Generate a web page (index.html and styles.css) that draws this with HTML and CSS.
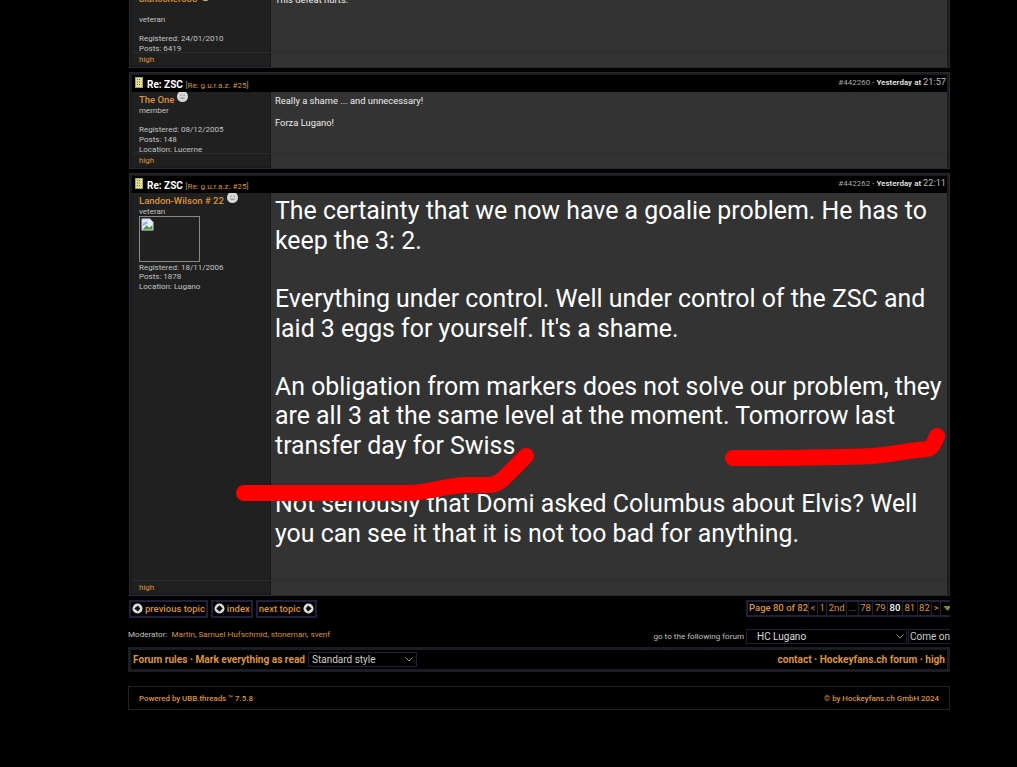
FILE: index.html
```html
<!DOCTYPE html>
<html lang="en">
<head>
    <meta charset="UTF-8">
    <meta name="viewport" content="width=device-width, initial-scale=1.0">
    <title>Re: ZSC - Hockeyfans.ch forum</title>
    <link rel="stylesheet" href="styles.css">
</head>
<body>

<div class="container">

    <!-- first post, scrolled partly out of view -->
    <div class="post">
        <div class="post-head"></div>
        <div class="post-body">
            <div class="user">
                <a class="user-name">bianconero88</a><svg class="status" viewBox="0 0 10 10"><circle cx="5" cy="5" r="5" fill="#d8c850"/></svg>
                <p>&nbsp;</p>
                <p>veteran</p>
                <p>&nbsp;</p>
                <p>Registered: 24/01/2010</p>
                <p>Posts: 6419</p>
            </div>
            <div class="text">This defeat hurts.</div>
        </div>
        <div class="post-foot"><a>high</a><span></span></div>
    </div>

    <div class="post">
        <div class="post-head">
            <span class="post-title"><svg class="doc-icon" viewBox="0 0 8 11"><rect x=".5" y=".5" width="7" height="10" fill="#e4e09a" stroke="#a8a450"/><path d="M2 2.5h4M2 5h4M2 7.5h4" stroke="#6a6a30" stroke-dasharray="1 1"/></svg>Re: ZSC <span class="post-ref">[<a>Re: g.u.r.a.z. #25</a>]</span></span>
            <span class="post-meta"><span class="post-id">#442260 -</span> <b>Yesterday at</b> <span class="post-time">21:57</span></span>
        </div>
        <div class="post-body">
            <div class="user">
                <a class="user-name">The One</a><svg class="status" viewBox="0 0 10 10"><circle cx="5" cy="5" r="5" fill="#d8d8d8"/><path d="M3 6.5h4" stroke="#888"/><path d="M3 4h1M6 4h1" stroke="#888"/></svg>
                <p>member</p>
                <p>&nbsp;</p>
                <p>Registered: 08/12/2005</p>
                <p>Posts: 148</p>
                <p>Location: Lucerne</p>
            </div>
            <div class="text">Really a shame ... and unnecessary!<br><br>Forza Lugano!</div>
        </div>
        <div class="post-foot"><a>high</a><span></span></div>
    </div>

    <div class="post">
        <div class="post-head">
            <span class="post-title"><svg class="doc-icon" viewBox="0 0 8 11"><rect x=".5" y=".5" width="7" height="10" fill="#e4e09a" stroke="#a8a450"/><path d="M2 2.5h4M2 5h4M2 7.5h4" stroke="#6a6a30" stroke-dasharray="1 1"/></svg>Re: ZSC <span class="post-ref">[<a>Re: g.u.r.a.z. #25</a>]</span></span>
            <span class="post-meta"><span class="post-id">#442262 -</span> <b>Yesterday at</b> <span class="post-time">22:11</span></span>
        </div>
        <div class="post-body big-body">
            <div class="user">
                <a class="user-name">Landon-Wilson # 22</a><svg class="status" viewBox="0 0 10 10"><circle cx="5" cy="5" r="5" fill="#d8d8d8"/><path d="M3 6.5h4" stroke="#888"/><path d="M3 4h1M6 4h1" stroke="#888"/></svg>
                <p>veteran</p>
                <div class="avatar">
                    <svg viewBox="0 0 16 16"><path d="M1 1h10l4 4v10H1z" fill="#e8eef5" stroke="#aab"/><path d="M2 14l5-5 3 3 4-3v5z" fill="#4c9a3c"/><path d="M2 7l4-3 3 2-7 4z" fill="#8fb8e8"/></svg>
                </div>
                <p>Registered: 18/11/2006</p>
                <p>Posts: 1878</p>
                <p>Location: Lugano</p>
            </div>
            <div class="text big-text">The certainty that we now have a goalie problem. He has to keep the 3: 2.<br><br>Everything under control. Well under control of the ZSC and laid 3 eggs for yourself. It's a shame.<br><br>An obligation from markers does not solve our problem, they are all 3 at the same level at the moment. Tomorrow last transfer day for Swiss<br><br>Not seriously that Domi asked Columbus about Elvis? Well you can see it that it is not too bad for anything.</div>
        </div>
        <div class="post-foot"><a>high</a><span></span></div>
    </div>

    <!-- topic navigation and pager -->
    <div class="nav-row">
        <div class="nav-buttons">
            <a class="nav-btn"><svg class="nav-icon" viewBox="0 0 12 12"><circle cx="6" cy="6" r="5.5" fill="#ddd"/><path d="M2.5 6L6.5 2.8 9 6 6.5 9.2z" fill="#111"/></svg>previous topic</a>
            <a class="nav-btn"><svg class="nav-icon" viewBox="0 0 12 12"><circle cx="6" cy="6" r="5.5" fill="#ddd"/><path d="M6 2.5L9.5 6 6 9.5 2.5 6z" fill="#111"/></svg>index</a>
            <a class="nav-btn">next topic<svg class="nav-icon" viewBox="0 0 12 12"><circle cx="6" cy="6" r="5.5" fill="#ddd"/><path d="M9.5 6L5.5 2.8 3 6 5.5 9.2z" fill="#111"/></svg></a>
        </div>
        <div class="pager">
            <b>Page 80 of 82</b><a>&lt;</a><a>1</a><a>2nd</a><a class="dots">...</a><a>78</a><a>79</a><a class="current">80</a><a>81</a><a>82</a><a>&gt;</a><a class="pager-end"><svg viewBox="0 0 10 6"><path d="M0 0h10L5 6z" fill="#8a8230"/></svg></a>
        </div>
    </div>

    <div class="mod-row">
        <div class="moderators">Moderator: &nbsp;<a>Martin</a>, <a>Samuel Hufschmid</a>, <a>stoneman</a>, <a>svenf</a></div>
        <div class="jump">
            <span class="jump-label">go to the following forum</span>
            <select class="jump-select"><option>HC Lugano</option></select>
            <span class="jump-btn">Come on</span>
        </div>
    </div>

    <div class="links">
        <div class="links-left">
            <span><a>Forum rules</a> · <a>Mark everything as read</a></span>
            <select class="style-select"><option>Standard style</option></select>
        </div>
        <div><a>contact</a> · <a>Hockeyfans.ch forum</a> · <a>high</a></div>
    </div>

    <footer>
        <span>Powered by UBB.threads ™ 7.5.8</span>
        <span>© by Hockeyfans.ch GmbH 2024</span>
    </footer>
</div>

<!-- red marker scribbles drawn over the post -->
<svg class="scribble" viewBox="0 0 1017 767">
    <path d="M244 493H410C430 492 445 486 465 485H488C495 485 500 482 503 479L526 456" />
    <path d="M733 458C780 458 830 458 872 456C890 455 910 450 927 449C932 448 934 444 937 436" />
</svg>

</body>
</html>
```

FILE: styles.css
```css
body {
    font-family: 'Roboto', sans-serif;
    background-color: #000;
    color: #ccc;
    margin: 0;
    padding: 0;
    height: 767px;
    overflow: hidden;
    position: relative;
}

a {
    color: #dd9338;
}

.container {
    width: 822px;
    margin: -29px 0 0 128px;
}

.post {
    border: 3px solid #1c1c20;
    margin: 0 0 4px 1px;
    background-color: #202020;
    outline: 1px solid #2a2a2e;
    outline-offset: -1px;
}

.post-head {
    display: flex;
    justify-content: space-between;
    align-items: center;
    height: 17px;
    padding: 0 1px 0 3px;
    background-color: #000;
    color: #fff;
}

.post-title {
    font-size: 10px;
    font-weight: 700;
    display: flex;
    align-items: center;
    margin-top: 2px;
    white-space: pre;
}

.doc-icon {
    width: 8px;
    height: 11px;
    margin: -5px 4px 0 0;
}

.post-ref {
    font-size: 8px;
    font-weight: 400;
    color: #999;
    margin-top: 1px;
}

.post-meta {
    font-size: 8px;
    color: #ddd;
    margin-top: -4px;
}

.post-id {
    color: #aaa;
}

.post-time {
    font-size: 9.2px;
    color: #bbb;
}

.post-body {
    display: grid;
    grid-template-columns: 138px 1fr;
    height: 61px;
}

.big-body {
    height: 387px;
}

.user {
    padding: 1px 0 0 7px;
    font-size: 8px;
    line-height: 9.7px;
    overflow: hidden;
}

.user p {
    margin: 0;
    color: #c4c4c4;
}

.user-name {
    font-size: 9.5px;
    font-weight: 500;
    line-height: 13px;
}

.status {
    width: 11px;
    height: 11px;
    margin: -3px 0 0 3px;
    vertical-align: 1px;
}

.avatar {
    width: 59px;
    height: 44px;
    border: 1px solid #888;
    margin: -1px 0 1px;
}

.avatar svg {
    width: 13px;
    height: 13px;
    display: block;
    margin: 1px;
}

.text {
    padding: 3px 4px;
    border-left: 1px solid #151515;
    background-color: #333;
    color: #eee;
    font-size: 9.4px;
    line-height: 11px;
}

.big-text {
    padding: 3.4px 2px 0 4px;
    font-size: 24.88px;
    line-height: 29.3px;
    color: #fff;
}

.post-foot {
    display: grid;
    grid-template-columns: 138px 1fr;
    height: 12px;
    font-size: 8px;
    line-height: 14px;
    border-top: 1px solid #2c2c2c;
}

.post-foot a {
    padding-left: 7px;
}

.post-foot span {
    background-color: #333;
    border-left: 1px solid #151515;
}

.nav-row {
    display: flex;
    justify-content: space-between;
    align-items: flex-start;
    height: 29px;
}

.nav-buttons {
    display: flex;
    gap: 3px;
    margin-left: 1px;
}

.nav-btn {
    display: flex;
    align-items: center;
    gap: 2px;
    height: 13px;
    padding: 0 1px 1px;
    border: 2px solid #20203a;
    font-size: 9.5px;
    font-weight: 500;
}

.nav-icon {
    width: 11px;
    height: 11px;
}

.pager {
    display: flex;
    box-sizing: border-box;
    width: 204px;
    height: 17px;
    border: solid #20203a;
    border-width: 2px 0 2px 2px;
    font-size: 9.5px;
    line-height: 12px;
    overflow: hidden;
}

.pager b {
    color: #dd9338;
    font-weight: 500;
    padding: 0 0 0 1px;
    white-space: nowrap;
}

.pager a {
    padding: 0 1.5px;
    border-left: 1px solid #20203a;
}

.pager .current {
    color: #fff;
    font-weight: 500;
}

.pager .dots {
    color: #888;
}

.pager a.pager-end {
    padding: 0 0 0 2px;
}

.pager-end svg {
    width: 9px;
    height: 5px;
}

.mod-row {
    display: flex;
    justify-content: space-between;
    align-items: flex-start;
    height: 15px;
    font-size: 8.1px;
    color: #c0c0c0;
}

.jump {
    display: flex;
    align-items: center;
    gap: 2px;
}

.jump-label {
    margin-top: -2px;
}

.jump-select,
.style-select {
    appearance: none;
    background: #000 url("data:image/svg+xml,%3Csvg xmlns='http://www.w3.org/2000/svg' width='8' height='5'%3E%3Cpath d='M.5.5l3.5 3.5 3.5-3.5' fill='none' stroke='%23999'/%3E%3C/svg%3E") no-repeat;
    border: 1px solid #20203a;
    border-radius: 0;
    font-family: 'Roboto', sans-serif;
    font-size: 10px;
}

.jump-select {
    width: 161px;
    height: 15px;
    padding: 0 0 0 10px;
    background-position: right 2px center;
    color: #ddd;
}

.jump-btn {
    width: 40px;
    height: 13px;
    margin-left: -1px;
    line-height: 13px;
    border: 1px solid #20203a;
    border-right: 0;
    padding-left: 1px;
    font-size: 10px;
    color: #ccc;
    overflow: hidden;
    white-space: nowrap;
}

.links {
    display: flex;
    justify-content: space-between;
    align-items: center;
    height: 19px;
    margin-top: 3px;
    padding: 0 2px;
    border: 3px solid #1c1c24;
    font-size: 10.1px;
    font-weight: 700;
    color: #dd9338;
}

.links-left {
    display: flex;
    align-items: center;
    gap: 3px;
}

.style-select {
    width: 109px;
    height: 15px;
    padding: 0 0 0 3px;
    background-position: right 3px center;
    color: #ccc;
    font-weight: 400;
}

footer {
    display: flex;
    justify-content: space-between;
    align-items: center;
    height: 22px;
    margin-top: 14px;
    padding: 0 10px;
    border: 1px solid #222;
    font-size: 7.9px;
    font-weight: 500;
    color: #dd9338;
}

.scribble {
    position: absolute;
    left: 0;
    top: 0;
    width: 1017px;
    height: 767px;
    pointer-events: none;
}

.scribble path {
    fill: none;
    stroke: #f00;
    stroke-width: 16;
    stroke-linecap: round;
    stroke-linejoin: round;
}
```
